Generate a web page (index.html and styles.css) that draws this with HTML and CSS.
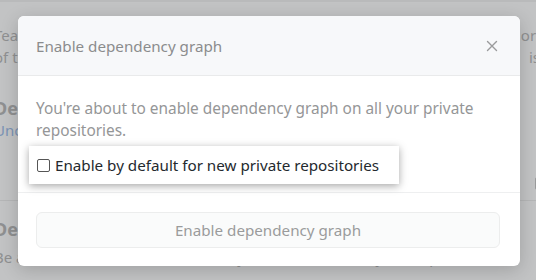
FILE: index.html
```html
<!DOCTYPE html>
<html>
<head>
<meta charset="utf-8">
<link rel="stylesheet" href="styles.css">
</head>
<body>
<div class="page">
  <div class="bg">
    <div class="bg-row r1"><span class="l">Tea</span><span class="r">ori</span></div>
    <div class="bg-row r2"><span class="l">of t</span><span class="r">is</span></div>
    <div class="bg-row r3"><span class="l h">Dep</span></div>
    <div class="bg-row r4"><span class="l link">Unc</span></div>
    <div class="bg-row r5"><span class="l"></span><span class="r"><span class="bg-check"></span></span></div>
    <div class="bg-sep"></div>
    <div class="bg-row r6"><span class="l h">Dep</span></div>
    <div class="bg-row r7"><span class="l">Be alerted when a new vulnerability is found in one of your dependencies.</span></div>
  </div>

  <div class="dialog">
    <div class="dialog-header">
      <h3 class="dialog-title">Enable dependency graph</h3>
      <svg class="close" width="12" height="12" viewBox="0 0 12 12"><path d="M1.5 1.5 L10.5 10.5 M10.5 1.5 L1.5 10.5" stroke="#9a9b9c" stroke-width="1.4" stroke-linecap="round" fill="none"/></svg>
    </div>
    <div class="dialog-body">
      <p class="desc">You're about to enable dependency graph on all your private repositories.</p>
      <label class="highlight"><span class="checkbox"></span><span>Enable by default for new private repositories</span></label>
    </div>
    <div class="dialog-footer">
      <div class="btn">Enable dependency graph</div>
    </div>
  </div>
</div>
</body>
</html>
```
FILE: styles.css
```css
html, body {
  margin: 0;
  padding: 0;
}
body {
  width: 536px;
  height: 280px;
  overflow: hidden;
  background: #c2c3c4;
  font-family: "Noto Sans", "Open Sans", sans-serif;
}
.page {
  position: relative;
  width: 536px;
  height: 280px;
  border-top: 2px solid #b9babb;
  box-sizing: border-box;
  overflow: hidden;
}
.bg {
  display: flex;
  flex-direction: column;
  color: #8f9091;
  font-size: 15px;
}
.bg-row {
  display: flex;
  justify-content: space-between;
  height: 22px;
  line-height: 22px;
  white-space: nowrap;
}
.bg-row .l { margin-left: -6px; }
.bg-row .r { margin-right: -4px; }
.r1 { margin-top: 22px; }
.r3 { margin-top: 29px; }
.h { font-weight: 700; font-size: 18px; }
.link { color: #7b93b5; }
.r5 { margin-top: 31px; height: 24px; align-items: center; }
.bg-check {
  display: inline-block;
  width: 11px;
  height: 11px;
  border: 1px solid #9a9b9c;
  border-radius: 2px;
  margin-right: -8px;
}
.bg-sep {
  height: 1px;
  background: #b5b6b7;
  margin-top: 4px;
}
.r6 { margin-top: 17px; }
.r7 { margin-top: 6px; }

.dialog {
  position: absolute;
  left: 18px;
  top: 14px;
  width: 502px;
  height: 250px;
  background: #ffffff;
  border-radius: 6px;
  box-shadow: 0 4px 18px rgba(0, 0, 0, 0.18);
  display: flex;
  flex-direction: column;
}
.dialog-header {
  height: 60px;
  box-sizing: border-box;
  background: #f7f8fa;
  border-bottom: 1px solid #e9eaeb;
  border-radius: 6px 6px 0 0;
  display: flex;
  align-items: center;
  justify-content: space-between;
  padding: 0 22px 0 18px;
}
.dialog-title {
  margin: 0;
  font-size: 15.2px;
  font-weight: 400;
  color: #8b8c8d;
}
.close { display: block; }
.dialog-body {
  padding: 22px 18px 0 18px;
  border-bottom: 1px solid #eeeff0;
  height: 117px;
  box-sizing: border-box;
}
.desc {
  margin: 0;
  font-size: 15.4px;
  line-height: 22px;
  color: #959697;
}
.highlight {
  display: inline-flex;
  align-items: center;
  gap: 5px;
  margin: 4px 0 0 -7px;
  height: 38px;
  padding: 0 20px 0 8px;
  background: #ffffff;
  box-shadow: 0 2px 8px rgba(0, 0, 0, 0.35);
  font-size: 15.2px;
  color: #24292e;
}
.checkbox {
  width: 11px;
  height: 11px;
  border: 1px solid #555;
  border-radius: 2px;
}
.dialog-footer {
  padding: 19px 20px 0 18px;
}
.btn {
  height: 36px;
  box-sizing: border-box;
  border: 1px solid #eceded;
  border-radius: 6px;
  background: #fafbfb;
  display: flex;
  align-items: center;
  justify-content: center;
  font-size: 15.2px;
  color: #9a9b9c;
}
```
